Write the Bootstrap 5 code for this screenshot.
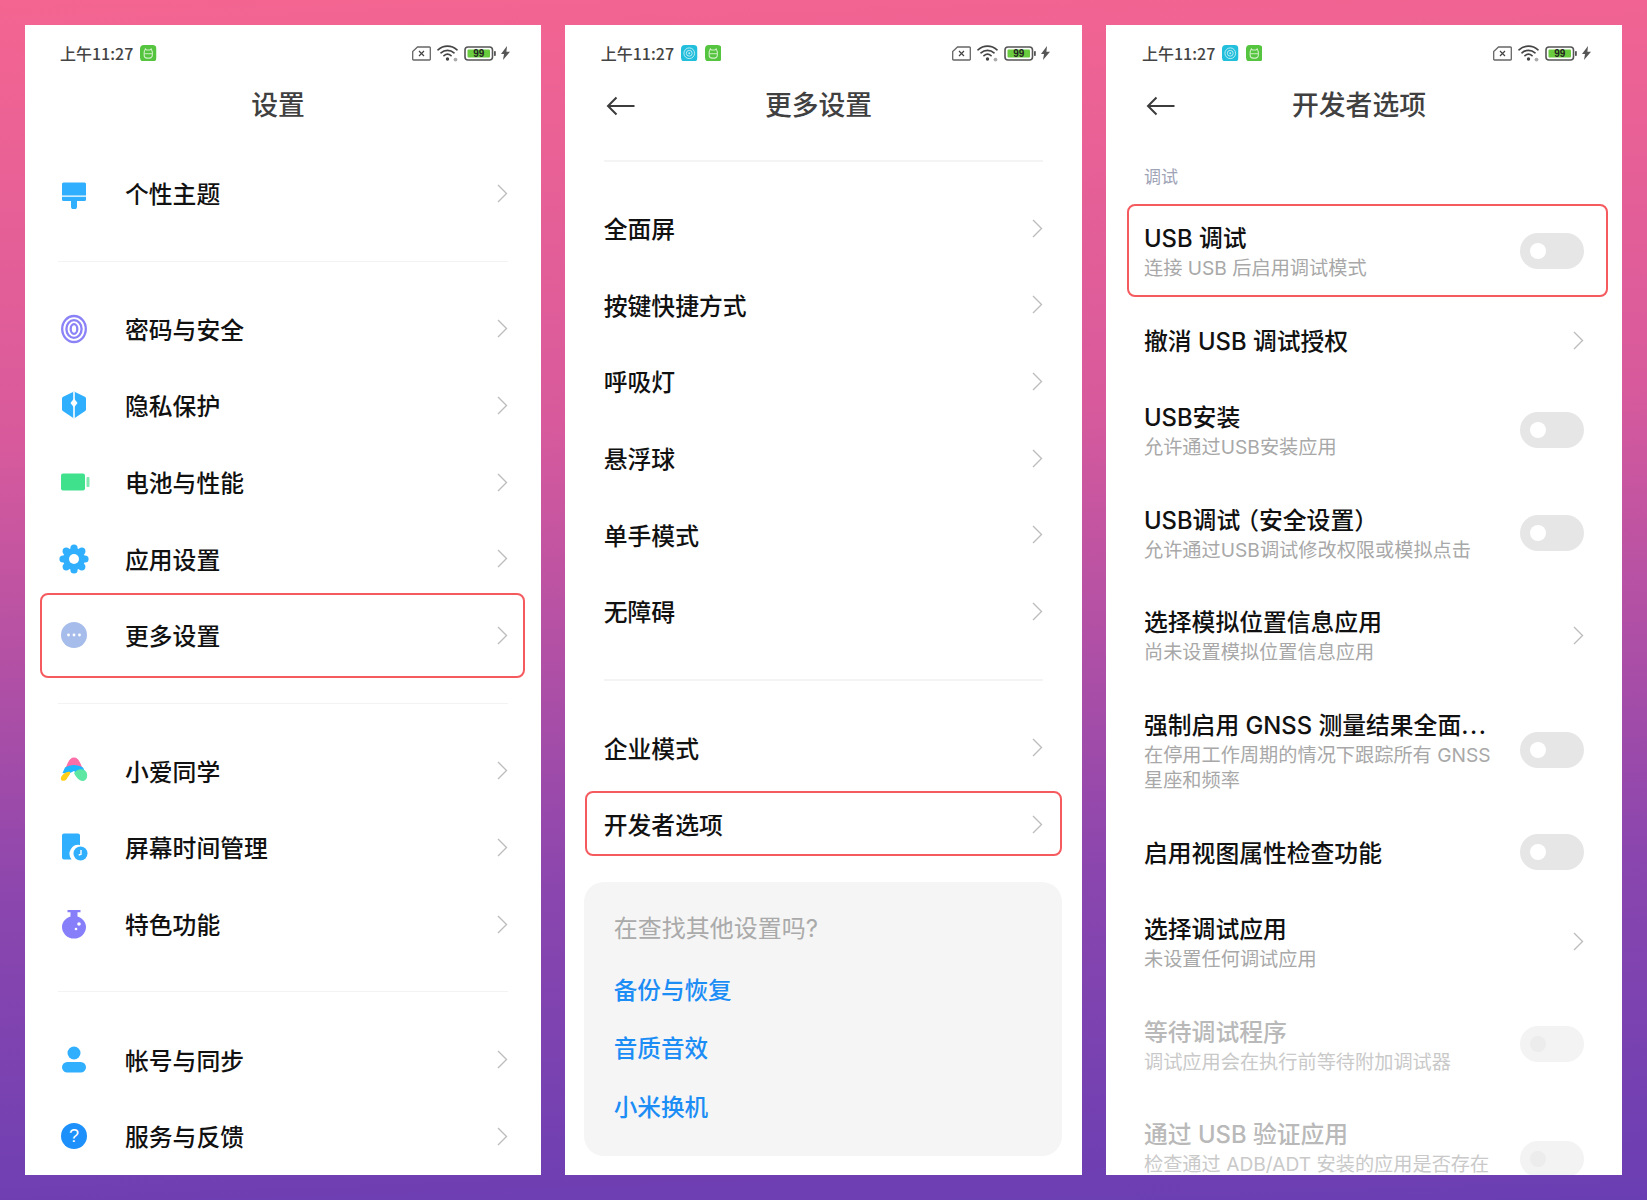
<!DOCTYPE html>
<html lang="zh-CN">
<head>
<meta charset="utf-8">
<title>设置</title>
<link href="https://cdn.jsdelivr.net/npm/bootstrap@5.3.0/dist/css/bootstrap.min.css" rel="stylesheet">
<style>
html,body{height:100%}
body{font-family:"Inter","Noto Sans CJK SC","Noto Sans",sans-serif;background:linear-gradient(178deg,#f46591 0%,#d85a9c 35%,#8b46ae 72%,#6a3eb3 100%);min-height:1200px;overflow:hidden}
.stage{display:grid;grid-template-columns:516px 517.500px 516px;column-gap:23.750px;padding:25px 25px 0}
.phone{height:1150px;background:#fff;overflow:hidden;padding:0 33px;position:relative}
.phone-b{padding:0 39px}
.phone-c{padding:0 38px}
.sbar{height:56px;display:flex;align-items:center;font-family:"Noto Sans CJK SC",sans-serif;font-size:16px;font-weight:500;color:#444;line-height:24px}
.sbar .tm{margin-left:2px}
.phone-b .sbar .tm{margin-left:-3px}
.phone-c .sbar .tm{margin-left:-2px}
.sbar .ap{width:16.500px;height:16.500px;margin-left:7px;flex:none}
.sbar .ri{margin-left:auto;display:flex;align-items:center;gap:6px;margin-right:-2px}
.phone-b .sbar .ri{margin-right:-7px}
.phone-c .sbar .ri{margin-right:-7px}
.sbar .bl{margin-left:-2px}
.hdr{height:50px;display:flex;align-items:center;justify-content:center;position:relative;font-size:26.800px;color:#404040;font-weight:500}
.hdr span{margin:0 10px 1px 0}
.hdr svg{position:absolute;left:2px;top:15px}
.rule{height:2px;background:#f4f4f4}
.rule-t{margin-top:29px}
.rule-m{margin:29px 0 29px}
.rw{min-height:76.600px;display:flex;align-items:center;position:relative;font-size:23.800px;font-weight:500;color:#111;line-height:30px}
.rw>span:not(.box,.tgl),.rw .tx{padding-top:4px}
.rw .ic{width:32px;height:32px;flex:none;margin-right:35px}
.rw .chv{margin-left:auto;flex:none}
.box{position:absolute;border:2px solid #f55a5f;border-radius:8px;top:-4px;bottom:-4px;left:-18px;right:-17px;pointer-events:none}
.box-2{top:5px;bottom:7px;left:-19px;right:-19px}
.box-3{top:4px;bottom:5px;left:-17px;right:-24px}
.g1{margin-top:24px}
.g2{margin-top:28px}
.hair{height:1px;background:#f3f3f3;margin:29px 0 29px}
.more-card{background:#f5f5f5;border-radius:20px;margin:19px -18.500px 0 -20px;height:274px;padding:30px 30px}
.more-card h6{font-size:24px;font-weight:400;color:#aaa;line-height:34px;margin:0 0 28px}
.more-card a{display:block;font-size:23.600px;font-weight:500;color:#1b8df5;line-height:34px;margin-bottom:24.500px;text-decoration:none}
.sec{font-size:17px;color:#9ea3b6;line-height:24px;margin-top:33.500px;margin-bottom:11px}
.tx{min-width:0}
.lp{letter-spacing:-5px}
.dots{letter-spacing:1.500px}
.sub{font-size:19.200px;font-weight:400;color:#a8a8a8;line-height:25.500px;margin-top:2px}
.rw2{min-height:102.600px}
.rw3{min-height:127.400px}
.tgl{margin-left:auto;width:64px;height:36px;border-radius:18px;background:#e6e6e6;flex:none;display:flex;align-items:center;padding-left:10px}
.tgl i{display:block;width:16px;height:16px;border-radius:50%;background:#fff}
.off .ttl{color:#b9b9b9}
.off .sub{color:#c9c9c9}
.off .tgl{background:#f3f3f3}
.off .tgl i{background:#ececec}
</style>
</head>
<body>
<svg width="0" height="0" class="position-absolute">
<defs>
<symbol id="chev" viewBox="0 0 11 19"><path d="M1 1l8.500 8.500L1 18" fill="none" stroke="#bdbdbd" stroke-width="1.400"/></symbol>
<symbol id="sim" viewBox="0 0 19 15"><path d="M5.500 1h12a.8.8 0 0 1 .8.8v11.400a.8.8 0 0 1-.8.8H1.500a.8.8 0 0 1-.8-.8V5.500z" fill="none" stroke="#666" stroke-width="1.300"/><path d="M7 5l5 5M12 5l-5 5" stroke="#444" stroke-width="1.200"/></symbol>
<symbol id="wifi" viewBox="0 0 21 18"><path d="M1 5.800C6.500 1 14.500 1 20 5.800M4 8.800c3.600-3.200 9.400-3.200 13 0M7 11.600c2-1.600 5-1.600 7 0" fill="none" stroke="#444" stroke-width="1.700" stroke-linecap="round"/><circle cx="10.500" cy="15" r="1.700" fill="#444"/><circle cx="18.500" cy="15.600" r="1.900" fill="#aaa"/></symbol>
<symbol id="batt" viewBox="0 0 33 15"><rect x="1" y="1" width="27.500" height="13" rx="3" fill="none" stroke="#555" stroke-width="1.600"/><rect x="3.500" y="3.400" width="22.500" height="8.200" rx="1" fill="#69cb3e"/><rect x="30" y="5" width="1.800" height="5" rx=".8" fill="#555"/><text x="14.700" y="11.300" text-anchor="middle" font-size="10" font-weight="700" font-family="Liberation Sans,sans-serif" fill="#222">99</text></symbol>
<symbol id="bolt" viewBox="0 0 9 14"><path d="M6 0L0 8h3l-1 6 7-8.300H5.400z" fill="#555"/></symbol>
<symbol id="apg" viewBox="0 0 17 17"><rect width="17" height="17" rx="4" fill="#55c43f"/><path d="M5.500 4l1.300 1.200h3.400L11.500 4l1.200 3v3.500a3 3 0 0 1-3 3H7.300a3 3 0 0 1-3-3V7z" fill="none" stroke="#d3f0cb" stroke-width="1.100"/><path d="M4.500 9h8" stroke="#d3f0cb" stroke-width="1"/></symbol>
<symbol id="apc" viewBox="0 0 17 17"><rect width="17" height="17" rx="4" fill="#22bfdd"/><circle cx="8.500" cy="8.500" r="5.500" fill="none" stroke="#bdeaf4" stroke-width="1"/><circle cx="8.500" cy="8.500" r="3" fill="none" stroke="#bdeaf4" stroke-width="1"/><circle cx="8.500" cy="8.500" r="1" fill="#bdeaf4"/></symbol>
<symbol id="back" viewBox="0 0 30 20"><path d="M28.500 10H2M10.500 1.500L2 10l8.500 8.500" fill="none" stroke="#3c3c3c" stroke-width="2"/></symbol>
</defs>
</svg>
<main class="stage">

<section class="phone">
  <div class="sbar">
    <span class="tm">上午11:27</span>
    <svg class="ap"><use href="#apg"/></svg>
    <span class="ri">
      <svg width="19" height="15"><use href="#sim"/></svg>
      <svg width="21" height="18"><use href="#wifi"/></svg>
      <svg width="33" height="15"><use href="#batt"/></svg>
      <svg class="bl" width="9" height="14"><use href="#bolt"/></svg>
    </span>
  </div>
  <div class="hdr"><span>设置</span></div>
  <div class="g1">
    <div class="rw">
      <svg class="ic" viewBox="0 0 32 32"><g transform="translate(0 2.500)"><path d="M4 4.500A1.500 1.500 0 0 1 5.500 3h21A1.500 1.500 0 0 1 28 4.500V16H4z" fill="#30afff"/><path d="M4 17.300h24V20a1.500 1.500 0 0 1-1.500 1.500H19V27a3 3 0 0 1-6 0V21.500H5.500A1.500 1.500 0 0 1 4 20z" fill="#30afff"/></g></svg>
      <span>个性主题</span><svg class="chv" width="11" height="19"><use href="#chev"/></svg>
    </div>
  </div>
  <div class="hair"></div>
  <div class="rw">
    <svg class="ic" viewBox="0 0 32 32" fill="none" stroke="#8a82f6" stroke-width="2.300"><ellipse cx="16" cy="16" rx="11.800" ry="13"/><ellipse cx="16" cy="16" rx="7.600" ry="8.800"/><ellipse cx="16" cy="16" rx="3.300" ry="4.800"/></svg>
    <span>密码与安全</span><svg class="chv" width="11" height="19"><use href="#chev"/></svg>
  </div>
  <div class="rw">
    <svg class="ic" viewBox="0 0 32 32"><path d="M16 2.500l10.800 5.200c.8.400 1.200 1 1.200 1.800v11c0 .8-.4 1.400-1.200 1.800L16 29.500 5.200 22.300C4.400 21.900 4 21.300 4 20.500v-11c0-.8.400-1.400 1.200-1.800z" fill="#30afff"/><path d="M15.200 2.500h1.600v27h-1.600z" fill="#fff"/><path d="M16 9.500l3.500 4.500-3.500 4.500-3.500-4.500z" fill="#fff"/></svg>
    <span>隐私保护</span><svg class="chv" width="11" height="19"><use href="#chev"/></svg>
  </div>
  <div class="rw">
    <svg class="ic" viewBox="0 0 32 32"><rect x="3" y="7.500" width="24" height="17" rx="2" fill="#40e18d"/><rect x="28.500" y="11" width="3" height="10" rx="1" fill="#7fe9b0"/></svg>
    <span>电池与性能</span><svg class="chv" width="11" height="19"><use href="#chev"/></svg>
  </div>
  <div class="rw">
    <svg class="ic" viewBox="0 0 32 32"><g fill="#30afff"><circle cx="16" cy="16" r="11"/><circle cx="16" cy="5" r="3.600"/><circle cx="16" cy="27" r="3.600"/><circle cx="5" cy="16" r="3.600"/><circle cx="27" cy="16" r="3.600"/><circle cx="8.200" cy="8.200" r="3.600"/><circle cx="23.800" cy="8.200" r="3.600"/><circle cx="8.200" cy="23.800" r="3.600"/><circle cx="23.800" cy="23.800" r="3.600"/></g><circle cx="16" cy="16" r="5" fill="#fff"/></svg>
    <span>应用设置</span><svg class="chv" width="11" height="19"><use href="#chev"/></svg>
  </div>
  <div class="rw">
    <svg class="ic" viewBox="0 0 32 32"><circle cx="16" cy="16" r="13" fill="#a6bcea"/><circle cx="10.500" cy="16" r="1.400" fill="#fff"/><circle cx="16" cy="16" r="1.400" fill="#fff"/><circle cx="21.500" cy="16" r="1.400" fill="#fff"/></svg>
    <span>更多设置</span><svg class="chv" width="11" height="19"><use href="#chev"/></svg>
    <span class="box"></span>
  </div>
  <div class="hair"></div>
  <div class="rw">
    <svg class="ic" viewBox="0 0 32 32"><path d="M16 2.500c3 0 4.500 2 6 5l2.500 5.500-8.500 3-8.500-3L10 7.500c1.500-3 3-5 6-5z" fill="#fb6ea7"/><path d="M7 12.500c5.500-3.500 12.500-3.500 18 0l2.500 5-7.500 2-4-3.500-6 3-5.500-1z" fill="#1fb6ff"/><path d="M16 18c3-4 8-5 11.500-2 3 3 2 10-3 10-3.500 0-6.500-4-8.500-8z" fill="#5de7a3"/><path d="M3 22.500c1-3 6-7 9-5.500 1 2-2 4.500-3 6.500-1.500 3.500-7.500 3-6-1z" fill="#ffcf19"/></svg>
    <span>小爱同学</span><svg class="chv" width="11" height="19"><use href="#chev"/></svg>
  </div>
  <div class="rw">
    <svg class="ic" viewBox="0 0 32 32"><path d="M6 2.500h14a2 2 0 0 1 2 2V14a9 9 0 0 0-8.500 14.500H6a2 2 0 0 1-2-2v-22a2 2 0 0 1 2-2z" fill="#30afff"/><circle cx="22.500" cy="22.500" r="7" fill="#30afff"/><path d="M23 19v4.300l-2.300.7" fill="none" stroke="#fff" stroke-width="1.400"/></svg>
    <span>屏幕时间管理</span><svg class="chv" width="11" height="19"><use href="#chev"/></svg>
  </div>
  <div class="rw">
    <svg class="ic" viewBox="0 0 32 32"><path d="M9.500 2h13v2.200h-3V8.500C25 10.500 28 14.500 28 19a12 11.500 0 0 1-24 0C4 14.500 7 10.500 12.500 8.500V4.200h-3z" fill="#877ffa"/><circle cx="21" cy="16" r="1.800" fill="#fff"/><circle cx="18" cy="21" r="1.300" fill="#fff"/></svg>
    <span>特色功能</span><svg class="chv" width="11" height="19"><use href="#chev"/></svg>
  </div>
  <div class="hair"></div>
  <div class="rw">
    <svg class="ic" viewBox="0 0 32 32"><circle cx="16" cy="9" r="6.500" fill="#30afff"/><rect x="4" y="18" width="24" height="10.500" rx="5.250" fill="#30afff"/></svg>
    <span>帐号与同步</span><svg class="chv" width="11" height="19"><use href="#chev"/></svg>
  </div>
  <div class="rw">
    <svg class="ic" viewBox="0 0 32 32"><circle cx="16" cy="16" r="13" fill="#1e90fb"/><text x="16" y="22" text-anchor="middle" font-size="18" font-weight="500" font-family="Liberation Sans,sans-serif" fill="#fff">?</text></svg>
    <span>服务与反馈</span><svg class="chv" width="11" height="19"><use href="#chev"/></svg>
  </div>
</section>

<section class="phone phone-b">
  <div class="sbar">
    <span class="tm">上午11:27</span>
    <svg class="ap"><use href="#apc"/></svg>
    <svg class="ap"><use href="#apg"/></svg>
    <span class="ri">
      <svg width="19" height="15"><use href="#sim"/></svg>
      <svg width="21" height="18"><use href="#wifi"/></svg>
      <svg width="33" height="15"><use href="#batt"/></svg>
      <svg class="bl" width="9" height="14"><use href="#bolt"/></svg>
    </span>
  </div>
  <div class="hdr"><svg width="30" height="20"><use href="#back"/></svg><span>更多设置</span></div>
  <div class="rule rule-t"></div>
  <div class="g2">
    <div class="rw"><span>全面屏</span><svg class="chv" width="11" height="19"><use href="#chev"/></svg></div>
    <div class="rw"><span>按键快捷方式</span><svg class="chv" width="11" height="19"><use href="#chev"/></svg></div>
    <div class="rw"><span>呼吸灯</span><svg class="chv" width="11" height="19"><use href="#chev"/></svg></div>
    <div class="rw"><span>悬浮球</span><svg class="chv" width="11" height="19"><use href="#chev"/></svg></div>
    <div class="rw"><span>单手模式</span><svg class="chv" width="11" height="19"><use href="#chev"/></svg></div>
    <div class="rw"><span>无障碍</span><svg class="chv" width="11" height="19"><use href="#chev"/></svg></div>
  </div>
  <div class="rule rule-m"></div>
  <div class="rw"><span>企业模式</span><svg class="chv" width="11" height="19"><use href="#chev"/></svg></div>
  <div class="rw"><span>开发者选项</span><svg class="chv" width="11" height="19"><use href="#chev"/></svg><span class="box box-2"></span></div>
  <div class="more-card">
    <h6>在查找其他设置吗?</h6>
    <a href="#">备份与恢复</a>
    <a href="#">音质音效</a>
    <a href="#">小米换机</a>
  </div>
</section>

<section class="phone phone-c">
  <div class="sbar">
    <span class="tm">上午11:27</span>
    <svg class="ap"><use href="#apc"/></svg>
    <svg class="ap"><use href="#apg"/></svg>
    <span class="ri">
      <svg width="19" height="15"><use href="#sim"/></svg>
      <svg width="21" height="18"><use href="#wifi"/></svg>
      <svg width="33" height="15"><use href="#batt"/></svg>
      <svg class="bl" width="9" height="14"><use href="#bolt"/></svg>
    </span>
  </div>
  <div class="hdr"><svg width="30" height="20"><use href="#back"/></svg><span>开发者选项</span></div>
  <div class="sec">调试</div>
  <div class="rw rw2"><div class="tx"><div class="ttl">USB 调试</div><div class="sub">连接 USB 后启用调试模式</div></div><span class="tgl"><i></i></span><span class="box box-3"></span></div>
  <div class="rw"><span>撤消 USB 调试授权</span><svg class="chv" width="11" height="19"><use href="#chev"/></svg></div>
  <div class="rw rw2"><div class="tx"><div class="ttl">USB安装</div><div class="sub">允许通过USB安装应用</div></div><span class="tgl"><i></i></span></div>
  <div class="rw rw2"><div class="tx"><div class="ttl">USB调<span class="lp">试</span>（安全设置）</div><div class="sub">允许通过USB调试修改权限或模拟点击</div></div><span class="tgl"><i></i></span></div>
  <div class="rw rw2"><div class="tx"><div class="ttl">选择模拟位置信息应用</div><div class="sub">尚未设置模拟位置信息应用</div></div><svg class="chv" width="11" height="19"><use href="#chev"/></svg></div>
  <div class="rw rw3"><div class="tx"><div class="ttl">强制启用 GNSS 测量结果全面<span class="dots">...</span></div><div class="sub">在停用工作周期的情况下跟踪所有 GNSS<br>星座和频率</div></div><span class="tgl"><i></i></span></div>
  <div class="rw"><span>启用视图属性检查功能</span><span class="tgl"><i></i></span></div>
  <div class="rw rw2"><div class="tx"><div class="ttl">选择调试应用</div><div class="sub">未设置任何调试应用</div></div><svg class="chv" width="11" height="19"><use href="#chev"/></svg></div>
  <div class="rw rw2 off"><div class="tx"><div class="ttl">等待调试程序</div><div class="sub">调试应用会在执行前等待附加调试器</div></div><span class="tgl"><i></i></span></div>
  <div class="rw rw3 off"><div class="tx"><div class="ttl">通过 USB 验证应用</div><div class="sub">检查通过 ADB/ADT 安装的应用是否存在<br>&nbsp;</div></div><span class="tgl"><i></i></span></div>
</section>

</main>
<script src="https://cdn.jsdelivr.net/npm/bootstrap@5.3.0/dist/js/bootstrap.bundle.min.js"></script>
</body>
</html>
